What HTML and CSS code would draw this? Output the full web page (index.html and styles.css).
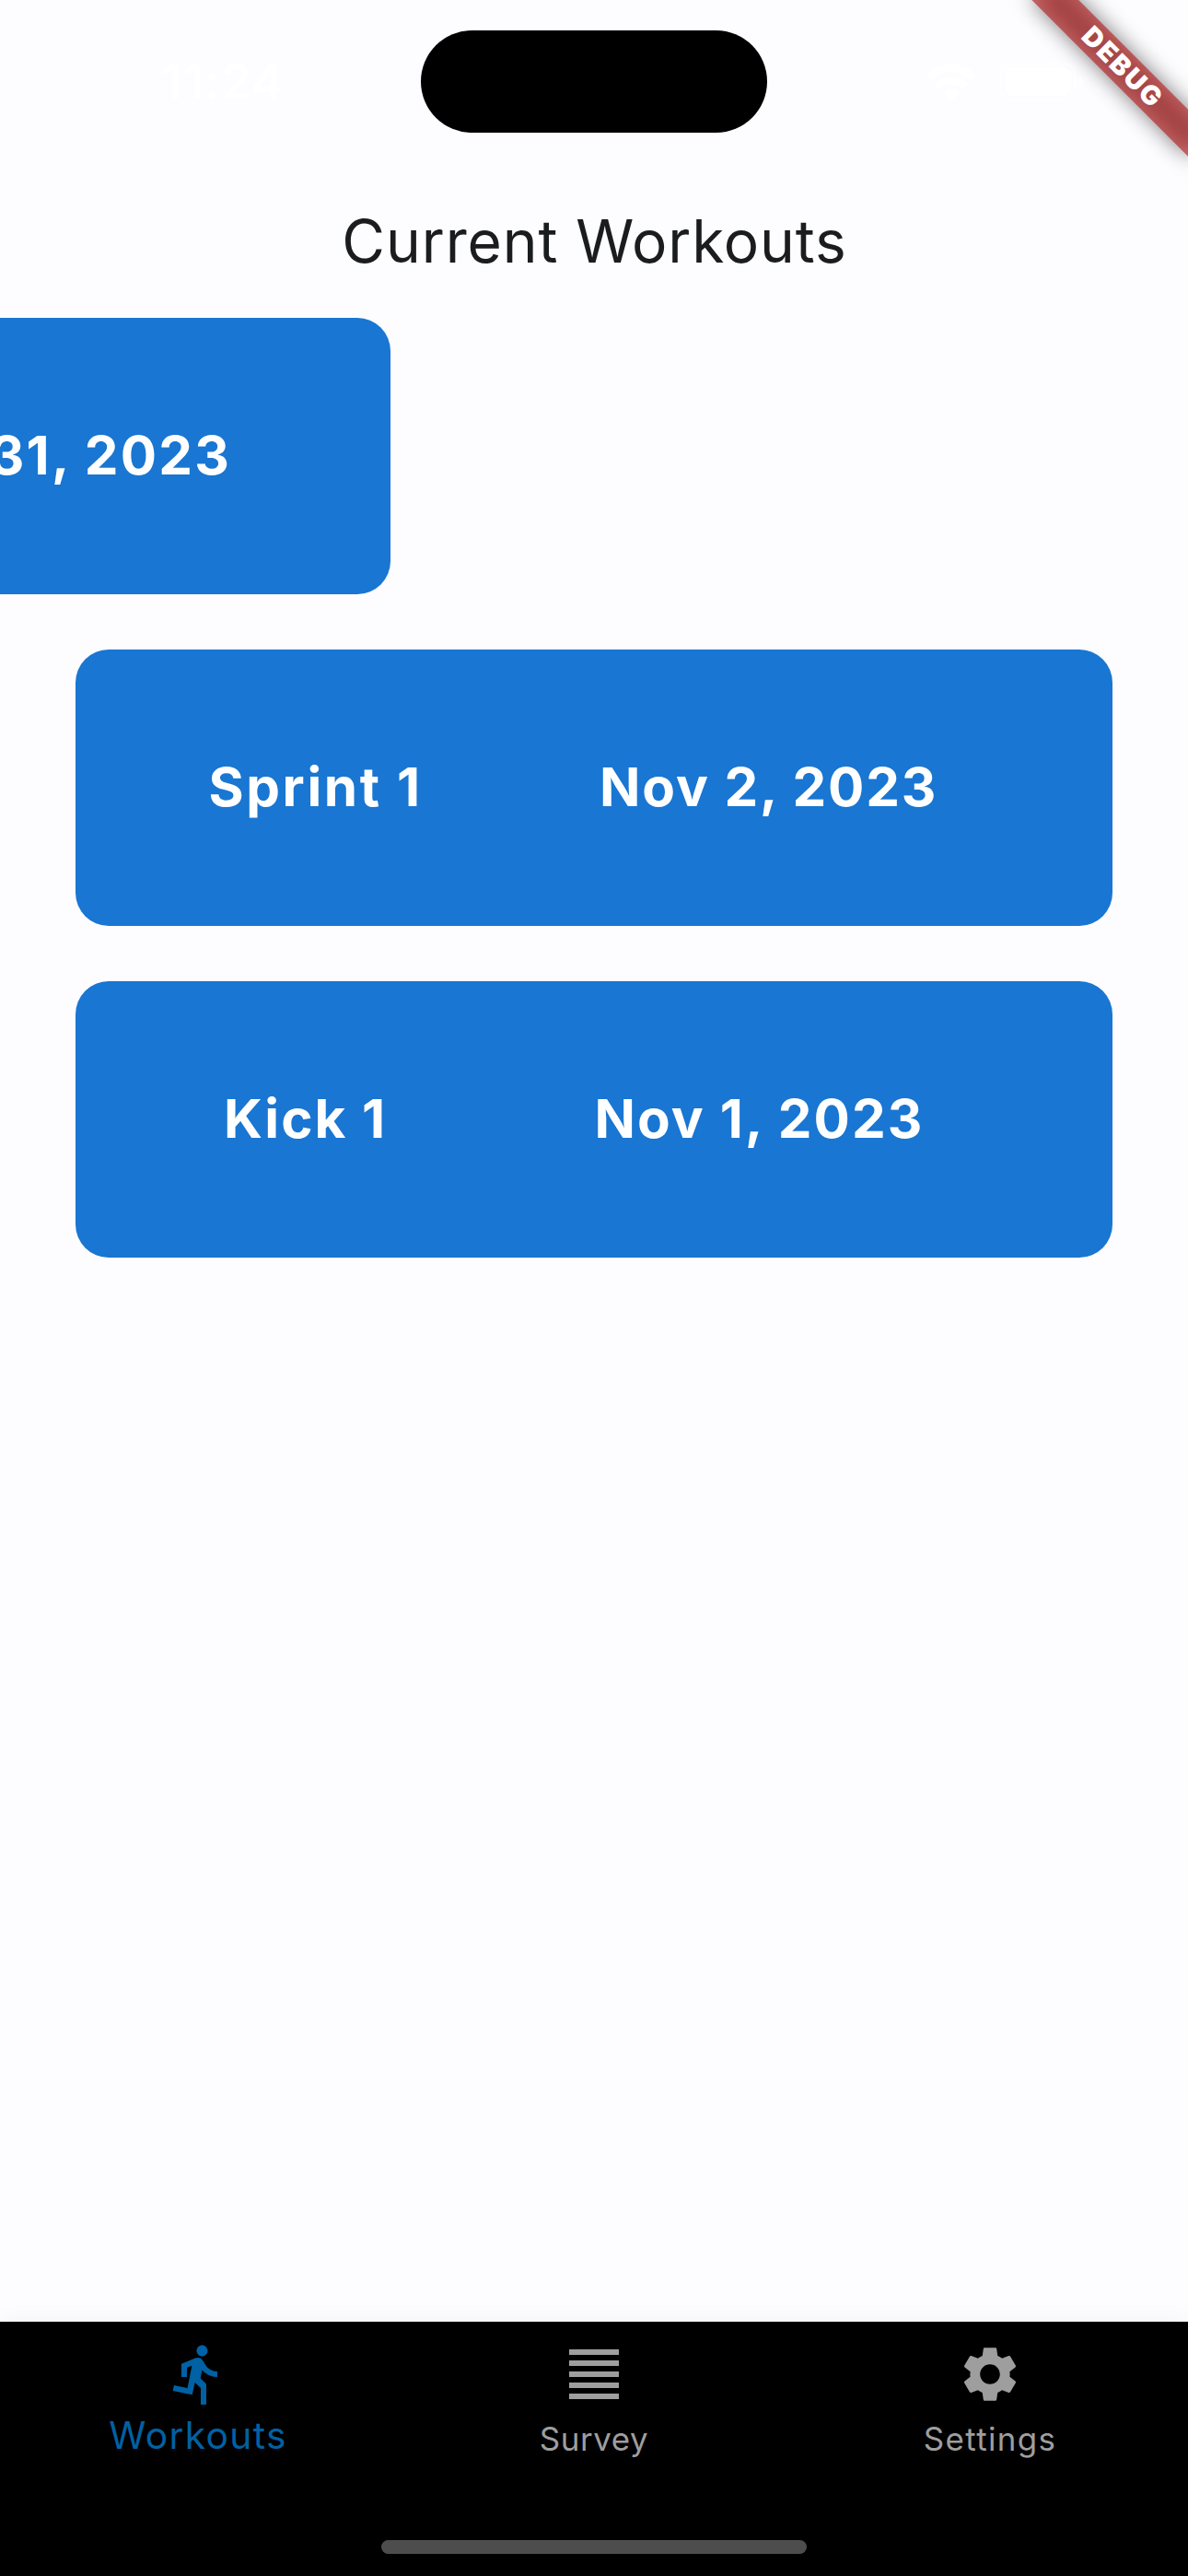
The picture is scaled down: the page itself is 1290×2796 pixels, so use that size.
FILE: index.html
```html
<!DOCTYPE html>
<html lang="en">
<head>
<meta charset="utf-8">
<title>Current Workouts</title>
<link rel="stylesheet" href="styles.css">
</head>
<body>
<div class="screen">
  <main class="content">
    <h1 class="title">Current Workouts</h1>
    <div class="list">
      <article class="card card-dismissing">
        <span class="date">Oct 31, 2023</span>
      </article>
      <article class="card card-sprint">
        <span class="name">Sprint 1</span>
        <span class="date">Nov 2, 2023</span>
      </article>
      <article class="card card-kick">
        <span class="name">Kick 1</span>
        <span class="date">Nov 1, 2023</span>
      </article>
    </div>
  </main>

  <nav class="tabs">
    <a class="tab tab-active">
      <svg class="tab-icon" viewBox="0 0 24 24"><path d="M13.49 5.48c1.1 0 2-.9 2-2s-.9-2-2-2-2 .9-2 2 .9 2 2 2zm-3.6 13.9l1-4.4 2.1 2v6h2v-7.5l-2.1-2 .6-3c1.3 1.5 3.3 2.5 5.5 2.5v-2c-1.9 0-3.5-1-4.3-2.4l-1-1.6c-.4-.6-1-1-1.7-1-.3 0-.5.1-.8.1l-5.2 2.2v4.7h2v-3.4l1.8-.7-1.6 8.1-4.9-1-.4 2 7 1.4z"/></svg>
      <span class="tab-label">Workouts</span>
    </a>
    <a class="tab tab-survey">
      <svg class="tab-icon" viewBox="0 0 24 24"><path d="M3 3h18v2H3zM3 7h18v2H3zM3 11h18v2H3zM3 15h18v2H3zM3 19h18v2H3z"/></svg>
      <span class="tab-label">Survey</span>
    </a>
    <a class="tab tab-settings">
      <svg class="tab-icon" viewBox="0 0 24 24"><path d="M19.14 12.94c.04-.3.06-.61.06-.94 0-.32-.02-.64-.07-.94l2.03-1.58c.18-.14.23-.41.12-.61l-1.92-3.32c-.12-.22-.37-.29-.59-.22l-2.39.96c-.5-.38-1.03-.7-1.62-.94l-.36-2.54c-.04-.24-.24-.41-.48-.41h-3.84c-.24 0-.43.17-.47.41l-.36 2.54c-.59.24-1.13.57-1.62.94l-2.39-.96c-.22-.08-.47 0-.59.22L2.74 8.87c-.12.21-.08.47.12.61l2.03 1.58c-.05.3-.09.63-.09.94s.02.64.07.94l-2.03 1.58c-.18.14-.23.41-.12.61l1.92 3.32c.12.22.37.29.59.22l2.39-.96c.5.38 1.03.7 1.62.94l.36 2.54c.05.24.24.41.48.41h3.84c.24 0 .44-.17.47-.41l.36-2.54c.59-.24 1.13-.56 1.62-.94l2.39.96c.22.08.47 0 .59-.22l1.92-3.32c.12-.22.07-.47-.12-.61l-2.01-1.58zM12 15.6c-1.98 0-3.6-1.62-3.6-3.6s1.62-3.6 3.6-3.6 3.6 1.62 3.6 3.6-1.62 3.6-3.6 3.6z"/></svg>
      <span class="tab-label">Settings</span>
    </a>
  </nav>

  <div class="banner-shadow"></div>
  <div class="banner"><span class="banner-text">DEBUG</span></div>

  <header class="status">
    <span class="clock">11:24</span>
    <div class="island"></div>
    <div class="indicators">
      <svg class="wifi" viewBox="0 0 56 40">
        <g fill="none" stroke="#fff" stroke-width="8">
          <path d="M3 15.500Q28-6 53 15.500"/>
          <path d="M12 25Q28 11 44 25"/>
        </g>
        <path fill="#fff" d="M28 40l-9-9q9-7 18 0z"/>
      </svg>
      <svg class="battery" viewBox="0 0 94 42">
        <rect x="1.500" y="1.500" width="81" height="39" rx="12" fill="none" stroke="#fff" stroke-opacity=".4" stroke-width="3"/>
        <rect x="6" y="6" width="72" height="30" rx="8" fill="#fff"/>
        <path d="M87 14q5 2 5 7t-5 7z" fill="#fff" fill-opacity=".5"/>
      </svg>
    </div>
  </header>
  <div class="home-bar"></div>
</div>
</body>
</html>
```
FILE: styles.css
```css
* { box-sizing: border-box; }

body {
  margin: 0;
  background: #fdfcff;
  font-family: Inter, "Liberation Sans", sans-serif;
}

.screen {
  position: relative;
  display: flex;
  flex-direction: column;
  width: 1290px;
  height: 2796px;
  overflow: hidden;
  background: #fdfcff;
}

.content {
  flex: 1;
  padding-top: 222px;
}

.title {
  margin: 0 0 43px;
  padding-left: 1px;
  font-size: 64px;
  font-weight: 400;
  line-height: 80px;
  letter-spacing: 0.9px;
  text-align: center;
  color: #1a1c1e;
}

.list {
  display: flex;
  flex-direction: column;
  gap: 60px;
  padding: 0 82px;
}

.card {
  display: flex;
  align-items: center;
  width: 1126px;
  height: 300px;
  padding-bottom: 2px;
  border-radius: 36px;
  background: #1976d2;
  color: #fff;
  font-size: 58.3px;
  font-weight: 700;
  line-height: 72px;
  letter-spacing: 1.9px;
  white-space: nowrap;
}

/* Mid-swipe: the card is sliding out to the left. */
.card-dismissing {
  justify-content: flex-end;
  margin-left: -784px;
  padding-right: 173px;
  letter-spacing: 2.2px;
}

.card-sprint { padding-left: 144.500px; }
.card-sprint .name { width: 424.500px; letter-spacing: 2.6px; }

.card-kick { padding-left: 161px; }
.card-kick .name { width: 402.500px; letter-spacing: 2px; }
.card-kick .date { letter-spacing: 2.1px; }

.tabs {
  display: grid;
  grid-template-columns: repeat(3, 1fr);
  height: 276px;
  padding-top: 21px;
  background: #000;
  box-shadow: 0 0 24px rgba(0, 0, 0, 0.05);
}

.tab {
  display: flex;
  flex-direction: column;
  align-items: center;
  gap: 10px;
  color: #9e9e9e;
  font-size: 34.9px;
  line-height: 48px;
}

.tab-active {
  gap: 7px;
  color: #0061a4;
  font-size: 40.7px;
}

.tab-icon {
  width: 72px;
  height: 72px;
  fill: currentColor;
}

.tab-label { letter-spacing: 1.35px; }
.tab-survey .tab-label { letter-spacing: 0.6px; }

.status {
  position: absolute;
  inset: 0 0 auto;
  display: grid;
  grid-template-columns: 457px 376px 1fr;
  align-items: center;
  height: 177px;
}

.clock {
  padding-left: 176px;
  color: #fff;
  font-size: 52px;
  font-weight: 600;
  letter-spacing: 1.2px;
}

.island {
  height: 111px;
  border-radius: 56px;
  background: #000;
}

.indicators {
  display: flex;
  align-items: center;
  gap: 24px;
  padding-left: 172px;
}

.wifi { width: 56px; height: 40px; }
.battery { width: 94px; height: 42px; }

.banner,
.banner-shadow {
  position: absolute;
  top: 84px;
  right: -120px;
  width: 240px;
  height: 36px;
  transform-origin: 120px -84px;
  transform: rotate(45deg);
}

.banner-shadow {
  background: rgba(0, 0, 0, 0.5);
  filter: blur(11.9px);
}

.banner {
  display: flex;
  align-items: center;
  justify-content: center;
  padding: 0 0 1px 3px;
  background: rgba(183, 28, 28, 0.627);
  color: #fff;
}

.banner-text {
  font-size: 29px;
  font-weight: 900;
  line-height: 30px;
  letter-spacing: 2px;
}

.home-bar {
  position: absolute;
  left: 414px;
  bottom: 24px;
  width: 462px;
  height: 15px;
  border-radius: 8px;
  background: #4d4d4d;
}
```
